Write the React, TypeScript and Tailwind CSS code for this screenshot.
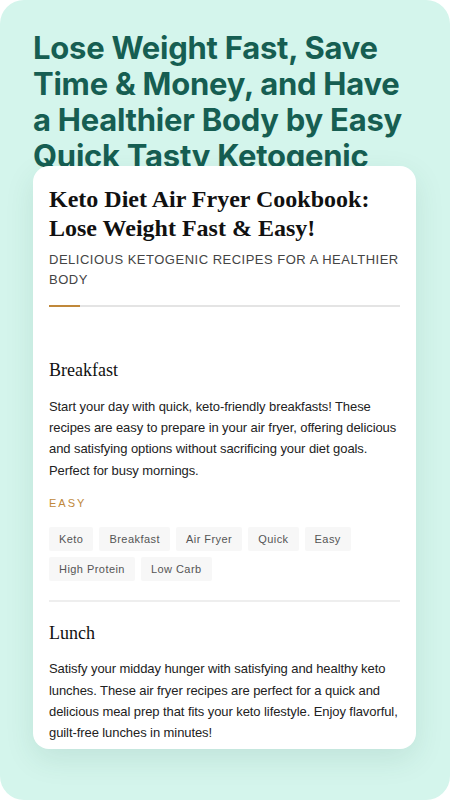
import React from "react";

const tags1 = ["Keto", "Breakfast", "Air Fryer", "Quick", "Easy"];
const tags2 = ["High Protein", "Low Carb"];

function Tag({ label }: { label: string }) {
  return (
    <span className="h-[24px] flex items-center px-[10px] bg-[#f7f7f7] rounded-[2px] text-[11px] tracking-[0.45px] text-[#555]">
      {label}
    </span>
  );
}

export default function App() {
  const sans = { fontFamily: '"Liberation Sans", Arial, sans-serif' };
  const serif = { fontFamily: '"Liberation Serif", "Times New Roman", serif' };
  return (
    <div className="w-[450px] h-[800px] bg-white">
      <div className="w-[450px] h-[800px] bg-[#d4f5ec] rounded-[24px] px-[33px] pt-[30px] overflow-hidden">
        <div className="h-[136px]">
          <h1
            className="text-[31px] leading-[36px] font-bold tracking-[-0.25px] text-[#165e52]"
            style={{ fontFamily: 'Inter, "Noto Sans", sans-serif' }}
          >
            Lose Weight Fast, Save Time &amp; Money, and Have a Healthier Body by Easy Quick Tasty Ketogenic Recipes
          </h1>
        </div>
        <div
          className="relative z-10 w-[383px] h-[583px] bg-white rounded-[16px] overflow-hidden px-[16px] pt-[19px] shadow-[0_10px_30px_rgba(20,80,60,0.10)]"
          style={sans}
        >
          <h2 className="text-[24px] leading-[29px] font-bold text-[#111]" style={serif}>
            Keto Diet Air Fryer Cookbook: Lose Weight Fast &amp; Easy!
          </h2>
          <p className="mt-[7px] text-[13px] leading-[20px] tracking-[0.5px] uppercase text-[#444]">
            Delicious Ketogenic Recipes for a Healthier Body
          </p>
          <div className="mt-[15px] h-[1.5px] bg-[#e4e4e4] flex">
            <div className="w-[31px] h-full bg-[#c0883a]" />
          </div>

          <section className="mt-[51px]">
            <h3 className="text-[18px] leading-[24px] text-[#111]" style={serif}>
              Breakfast
            </h3>
            <p className="mt-[14px] text-[13px] leading-[21.4px] tracking-[-0.08px] text-[#222]">
              Start your day with quick, keto-friendly breakfasts! These recipes are easy to prepare in your air fryer, offering delicious and satisfying options without sacrificing your diet goals. Perfect for busy mornings.
            </p>
            <div className="mt-[14px] text-[11px] leading-[16px] tracking-[2px] text-[#c0883a]">EASY</div>
            <div className="mt-[16px] flex flex-col gap-[6px]">
              <div className="flex gap-[6px]">
                {tags1.map((t) => (
                  <Tag key={t} label={t} />
                ))}
              </div>
              <div className="flex gap-[6px]">
                {tags2.map((t) => (
                  <Tag key={t} label={t} />
                ))}
              </div>
            </div>
            <div className="mt-[19px] h-[2px] bg-[#eeeeee]" />
          </section>

          <section className="mt-[19px]">
            <h3 className="text-[18px] leading-[24px] text-[#111]" style={serif}>
              Lunch
            </h3>
            <p className="mt-[13px] text-[13px] leading-[21.4px] tracking-[-0.08px] text-[#222]">
              Satisfy your midday hunger with satisfying and healthy keto lunches. These air fryer recipes are perfect for a quick and delicious meal prep that fits your keto lifestyle. Enjoy flavorful, guilt-free lunches in minutes!
            </p>
          </section>
        </div>
      </div>
    </div>
  );
}
